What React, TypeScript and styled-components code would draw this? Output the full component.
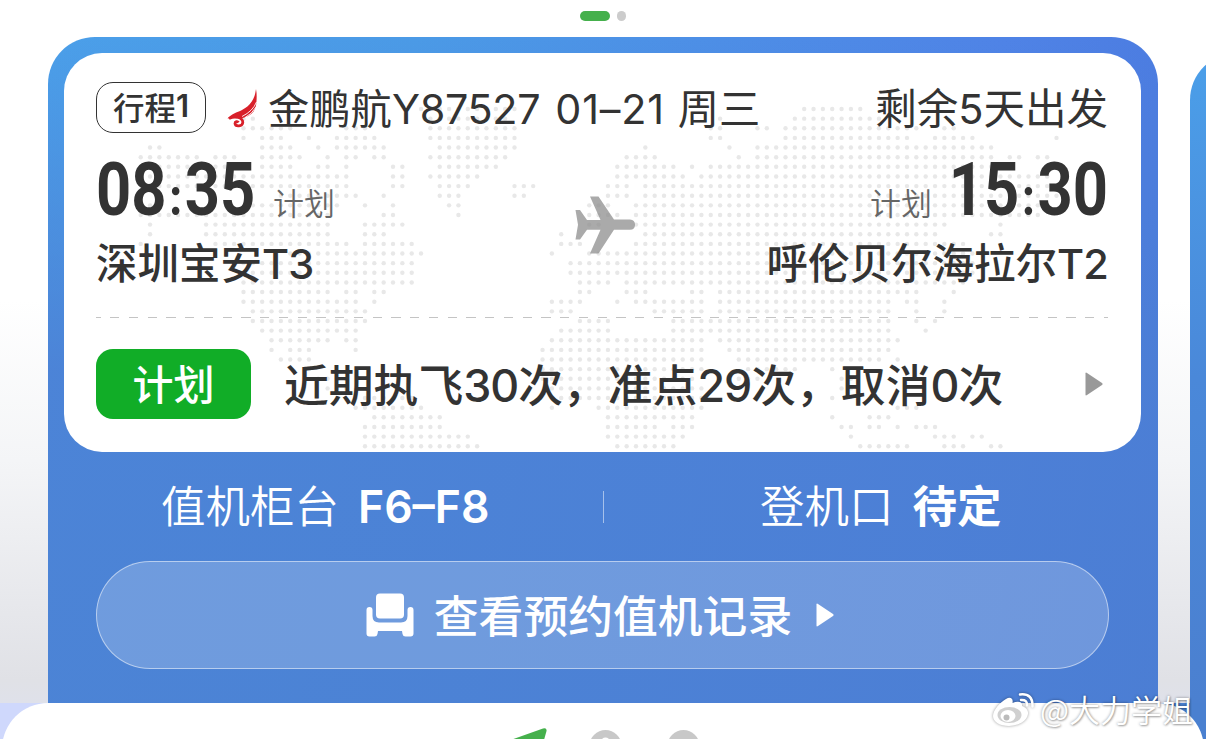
import React from 'react';
import styled, { createGlobalStyle } from 'styled-components';

// 점 지도: 행마다 열 구간
const mapRows: string[] = [
  '30-40,71-77',
  '11-12,31-39,62,70-79',
  '11-16,22-24,31-40,61-62,66-67,69-83,86-87',
  '11,13-15,18,21-25,31-40,61-62,69-82,85-89,98',
  '1-2,13-16,19,21-26,32-40,54,63,66-91',
  '0-6,8-10,13-17,20,22-23,25-26,31-39,52-55,64,66-91,93-94,96-97',
  '0-10,13-16,19-20,22,27-28,32-38,51-57,59,61-92',
  '0-22,27-28,31-36,51-58,60-97',
  '1-22,27-28,32-35,40-42,50-52,54-97',
  '15-23,26,32-34,40-41,50-52,54-98',
  '1,12-21,24,27,33-34,48-50,53-97',
  '0-20,26-27,34,48-51,53-96',
  '1,7-20,24-28,48-49,53-86,92',
  '1,7-20,24-26,45,54-85,91-92',
  '0,8-22,24-29,45-47,53-88',
  '16-30,44,48-90',
  '11-29,46-89',
  '11-29,46-89',
  '11-29,47-50,52-88',
  '11-20,22-23,25-26,47-48,52-54,59-60,62-83,87',
  '11-23,25,44-47,51,53-60,62-80,82-83,86',
  '12-24,44-46,55-60,62-80,83,86',
  '12-24,47-50,57-80,83,85',
  '13-23,45-50,57-80,84',
  '14-20,22-23,44-60,62-81',
  '14,16-18,23,43-60,63-80',
  '15-18,43-60,64-79,81',
  '18,43-60,65-70,74',
  '19-22,43-59,63-66,75-76',
  '20-22,44-60,75-76',
  '23-29,44-60,74',
  '23-30,44,49-60,81-83',
  '25-32,50-59,74,78-80',
  '24-32,50-55,57-59,75-76,78-79,81,83-85',
  '24-35,50-58,76,85-87,89-90',
  '24-36,51-57,77-82,86-88,91-92',
];

const getCols = (row: string) => {
  const cols: number[] = [];
  row.split(',').forEach((part) => {
    const [from, to] = part.split('-').map(Number);
    for (let c = from; c <= (to ?? from); c++) cols.push(c);
  });
  return cols;
};

const DotMap = () => (
  <MapSvg width="1077" height="399" viewBox="64 53 1077 399">
    {mapRows.map((row, r) =>
      getCols(row).map((c) => (
        <circle key={`${r}-${c}`} cx={140.7 + c * 9.345} cy={109 + r * 9.635} r="2.2" />
      ))
    )}
  </MapSvg>
);

const AirlineLogo = () => (
  <svg width="30" height="40" viewBox="0 0 30 40">
    <path
      d="M29 1C28 11 23 18 15 22C10 24.5 4 26 0.5 30.5C5 29.5 12 30 14 30.500C19 28.500 29 28 29.500 13Q30 6 29 1Z"
      fill="#d8202a"
    />
    <path d="M29.500 14Q26 23 15 28.500M29 19Q25 26 18 29.500M28 23Q26 28 21 30" stroke="#fff" strokeWidth="0.9" fill="none" />
    <path
      d="M2 30.500C8 27.500 16 29.500 15.800 34.500C15.500 38.500 8.500 39 8 35.500C8 33.500 10.500 33 11.500 34.500"
      stroke="#d8202a"
      strokeWidth="2.800"
      fill="none"
    />
  </svg>
);

const PlaneIcon = () => (
  <svg width="60" height="58" viewBox="0 0 60 58">
    <path
      d="M15 0.500H23.500L39 23.500H55Q60 24 60 28.700Q60 33.500 55 33.800H39L23.500 57.500H15L25.500 33.800H12L5 43.500H0.500L3 28.700L0.500 14H5L12 24H25.500Z"
      fill="#8e8e8e"
      fillOpacity="0.75"
    />
  </svg>
);

const SeatIcon = () => (
  <svg width="48" height="44" viewBox="0 0 48 44">
    <rect x="10" y="0.500" width="28" height="25" rx="4" fill="#fff" />
    <path
      d="M0.500 17Q0.500 14 3.500 14Q6.500 14 6.500 17V23Q6.500 29.500 13 29.500H35Q41.500 29.500 41.500 23V17Q41.500 14 44.500 14Q47.500 14 47.500 17V40.500Q47.500 43.500 44.500 43.500H39.500Q37 43.500 36.500 41L36 38H12L11.500 41Q11 43.500 8.500 43.500H3.500Q0.500 43.500 0.500 40.500Z"
      fill="#fff"
    />
  </svg>
);

const Arrow = ({ color }: { color: string }) => (
  <svg width="18" height="24" viewBox="0 0 18 24">
    <path d="M0.500 1.500Q0.500 0 2 1L17 11Q18.200 12 17 13L2 23Q0.500 24 0.500 22.500Z" fill={color} />
  </svg>
);

const WeiboIcon = () => (
  <svg width="42" height="36" viewBox="0 0 42 36">
    <path
      d="M14 7C18 4.500 21.500 6 20.500 11C25 9 31 9 30 14C34 15.500 36.500 18 36 22C35 29 26 34 17 34C8 34 1 30 1 24C1 18 8 10.500 14 7Z"
      fill="#fff"
    />
    <ellipse cx="17.500" cy="23" rx="12" ry="8" fill="#d0d0d0" />
    <ellipse cx="16" cy="24" rx="7.500" ry="6" fill="#fff" />
    <circle cx="14.500" cy="25.500" r="3" fill="#bbb" />
    <path d="M28 2.500Q41 1 40.500 14.500M29 8Q35.500 7.500 35 13.500" stroke="#fff" strokeWidth="2.500" fill="none" strokeLinecap="round" />
  </svg>
);

const App = () => {
  return (
    <Container>
      <GlobalStyle />
      <Pager>
        <PagerDot $active />
        <PagerDot />
      </Pager>
      <CardRow>
        <Card>
          <Ticket>
            <DotMap />
            <TitleRow>
              <TripTag>行程<TagNum>1</TagNum></TripTag>
              <AirlineLogo />
              <FlightName>
                金鹏航<Num $gap={-0.3}>Y87527</Num>
                <DateText>01–21</DateText>周三
              </FlightName>
              <Remain>
                剩余<Num $gap={0}>5</Num>天出发
              </Remain>
            </TitleRow>
            <TimeRow>
              <Time>
                08<Colon>:</Colon>35
              </Time>
              <PlanText>计划</PlanText>
              <Spacer />
              <PlanText>计划</PlanText>
              <Time $right>
                15<Colon>:</Colon>30
              </Time>
              <PlaneBox>
                <PlaneIcon />
              </PlaneBox>
            </TimeRow>
            <AirportRow>
              <span>
                深圳宝安<Num $gap={-0.8}>T3</Num>
              </span>
              <span>
                呼伦贝尔海拉尔<Num $gap={-0.8}>T2</Num>
              </span>
            </AirportRow>
            <Dash />
            <StatusRow>
              <StatusTag>计划</StatusTag>
              <StatusText>
                近期执飞<Num $gap={-1}>30</Num>次，准点<Num $gap={-1}>29</Num>次，取消<Num $gap={-1}>0</Num>次
              </StatusText>
              <Arrow color="#999" />
            </StatusRow>
          </Ticket>
          <InfoRow>
            <Info>
              值机柜台<InfoValue>F6–F8</InfoValue>
            </Info>
            <Divider />
            <Info>
              登机口<InfoValue>待定</InfoValue>
            </Info>
          </InfoRow>
          <RecordButton>
            <SeatIcon />
            <RecordText>查看预约值机记录</RecordText>
            <Arrow color="#fff" />
          </RecordButton>
        </Card>
        <NextCard />
      </CardRow>
      <SheetArea>
        <Sheet>
          <svg width="200" height="12" viewBox="0 0 200 12">
            <path d="M0 11.500L31 0.500Q35 -0.500 34.500 3L32 12H0Z" fill="#45b04c" />
            <circle cx="93.500" cy="18" r="16" fill="#c8c8c8" />
            <circle cx="93.500" cy="14" r="4.500" fill="#fff" />
            <circle cx="171.500" cy="18" r="16" fill="#c8c8c8" />
          </svg>
        </Sheet>
      </SheetArea>
      <Watermark>
        <WeiboIcon />
        <span>@大力学姐</span>
      </Watermark>
    </Container>
  );
};

export default App;

const GlobalStyle = createGlobalStyle`
  * {
    box-sizing: border-box;
  }
  body {
    margin: 0;
    font-family: 'Noto Sans CJK SC', sans-serif;
    color: #333;
  }
  svg {
    display: block;
    flex-shrink: 0;
  }
`;

const Container = styled.div`
  position: relative;
  width: 1206px;
  height: 739px;
  overflow: hidden;
  display: flex;
  flex-direction: column;
  white-space: nowrap;
  background: linear-gradient(#fff 300px, #f4f5f7 460px, #e0e1e6 680px, #dfe1ea 703px);
`;

const Pager = styled.div`
  flex-shrink: 0;
  display: flex;
  justify-content: center;
  gap: 7px;
  height: 37px;
  padding-top: 11px;
`;

const PagerDot = styled.div<{ $active?: boolean }>`
  width: ${(props) => (props.$active ? '30px' : '9px')};
  height: 10px;
  border-radius: 5px;
  background: ${(props) => (props.$active ? '#45b04c' : '#ccc')};
`;

const CardRow = styled.div`
  flex-shrink: 0;
  display: flex;
  gap: 32px;
  height: 666px;
  padding-left: 48px;
`;

const Card = styled.div`
  flex-shrink: 0;
  width: 1110px;
  padding: 16px 17px 0 16px;
  border-radius: 47px 47px 0 0;
  background: linear-gradient(rgba(78, 130, 210, 0) 0%, rgba(76, 127, 212, 0.85) 50%, rgba(76, 127, 210, 0.85) 100%),
    linear-gradient(100deg, #4b9fe9 0%, #4b9ae6 30%, #4f83e6 78%, #4a78de 100%);
`;

const NextCard = styled.div`
  flex-shrink: 0;
  width: 300px;
  margin-top: 16px;
  border-radius: 47px 0 0 0;
  background: linear-gradient(#4b9fe9, #4a88d9 50%, #4b80d0);
`;

const Ticket = styled.div`
  position: relative;
  height: 399px;
  padding: 29px 33px 0 32px;
  border-radius: 38px;
  background: #fff;
  overflow: hidden;
`;

const MapSvg = styled.svg`
  position: absolute;
  left: 0;
  top: 0;
  fill: #e8e8e8;
`;

const TitleRow = styled.div`
  position: relative;
  display: flex;
  align-items: center;
  height: 51px;
`;

const TripTag = styled.div`
  display: flex;
  align-items: center;
  justify-content: center;
  width: 110px;
  height: 51px;
  margin-right: 21px;
  padding-bottom: 3px;
  border: 1.5px solid #333;
  border-radius: 17px;
  font-size: 31.500px;
  font-weight: 500;
  line-height: 46px;
`;

const TagNum = styled.span`
  font-family: Inter, sans-serif;
  font-weight: 600;
  font-size: 31px;
`;

const Num = styled.span<{ $gap: number }>`
  font-family: Inter, sans-serif;
  letter-spacing: ${(props) => props.$gap}px;
`;

const FlightName = styled.div`
  margin-left: 11px;
  font-size: 41.300px;
  font-weight: 400;
  line-height: 51px;
`;

const DateText = styled.span`
  margin: 0 13px 0 15px;
  font-family: Inter, sans-serif;
  letter-spacing: 0.8px;
`;

const Remain = styled.div`
  margin-left: auto;
  font-size: 41.500px;
  font-weight: 400;
  line-height: 51px;
`;

const TimeRow = styled.div`
  position: relative;
  display: flex;
  align-items: baseline;
  height: 103px;
`;

const Time = styled.div<{ $right?: boolean }>`
  width: 158px;
  display: flex;
  align-items: baseline;
  justify-content: ${(props) => (props.$right ? 'flex-end' : 'flex-start')};
  font-family: Roboto, sans-serif;
  font-size: 74px;
  font-weight: 700;
  line-height: 113px;
  transform: scaleX(0.83);
  transform-origin: ${(props) => (props.$right ? 'right' : 'left')};
`;

const Colon = styled.span`
  flex-shrink: 0;
  width: 22px;
  font-size: 50px;
  font-weight: 900;
  text-align: center;
`;

const PlanText = styled.div`
  margin: 0 18px 0 19px;
  font-size: 31px;
  font-weight: 350;
  color: #666;
`;

const Spacer = styled.div`
  flex: 1;
`;

// 가운데 비행기 아이콘
const PlaneBox = styled.div`
  position: absolute;
  left: 479px;
  top: 63px;
`;

const AirportRow = styled.div`
  position: relative;
  display: flex;
  justify-content: space-between;
  height: 55px;
  font-size: 41.500px;
  font-weight: 500;
  line-height: 50px;
`;

const Dash = styled.div`
  position: relative;
  height: 1px;
  margin-top: 26px;
  background: repeating-linear-gradient(
    90deg,
    #c4c4c4 0 4.700px,
    transparent 4.700px 14.100px,
    #c4c4c4 14.100px 18.750px
  );
`;

const StatusRow = styled.div`
  position: relative;
  display: flex;
  align-items: center;
  height: 70px;
  margin-top: 31px;
  padding-right: 5px;

  svg {
    margin-left: auto;
  }
`;

const StatusTag = styled.div`
  width: 155px;
  height: 70px;
  border-radius: 17px;
  background: #11ad27;
  color: #fff;
  font-size: 41px;
  font-weight: 500;
  line-height: 67px;
  text-align: center;
`;

const StatusText = styled.div`
  margin-left: 33px;
  font-size: 44.800px;
  font-weight: 500;
  line-height: 68px;
`;

const InfoRow = styled.div`
  display: flex;
  align-items: center;
  height: 109px;
  margin: 0 -17px 0 -16px;
  color: #fff;
`;

const Info = styled.div`
  flex: 1;
  font-size: 44.500px;
  font-weight: 350;
  line-height: 60px;
  text-align: center;
  padding-bottom: 3px;
`;

const InfoValue = styled.span`
  margin-left: 19px;
  font-family: Inter, 'Noto Sans CJK SC', sans-serif;
  font-weight: 600;
`;

const Divider = styled.div`
  width: 1px;
  height: 32px;
  background: rgba(255, 255, 255, 0.5);
`;

const RecordButton = styled.div`
  display: flex;
  align-items: center;
  justify-content: center;
  width: 1013px;
  height: 108px;
  margin-left: 32px;
  padding-right: 5px;
  border: 1.500px solid rgba(255, 255, 255, 0.5);
  border-radius: 54px;
  background: rgba(255, 255, 255, 0.2);
  color: #fff;
`;

const RecordText = styled.div`
  margin: 0 24px 0 20px;
  font-size: 44.800px;
  font-weight: 500;
  line-height: 100px;
  padding-bottom: 3px;
`;

const SheetArea = styled.div`
  flex: 1;
  padding: 0 2px;
  background: linear-gradient(90deg, #cfd8fc 50%, #4a80d0 50%);
`;

const Sheet = styled.div`
  height: 100px;
  padding: 25px 0 0 510px;
  border-radius: 46px 46px 0 0;
  background: #fff;
`;

const Watermark = styled.div`
  position: absolute;
  left: 992px;
  top: 692px;
  display: flex;
  align-items: center;
  gap: 6px;
  height: 36px;
  color: #fff;
  font-size: 31px;
  font-weight: 350;
  line-height: 32px;
  text-shadow: 0 0 3px rgba(0, 0, 0, 0.4), 1px 1px 2px rgba(0, 0, 0, 0.25);

  span {
    padding-bottom: 2px;
  }

  svg {
    filter: drop-shadow(0 0 1.500px rgba(0, 0, 0, 0.4));
  }
`;
